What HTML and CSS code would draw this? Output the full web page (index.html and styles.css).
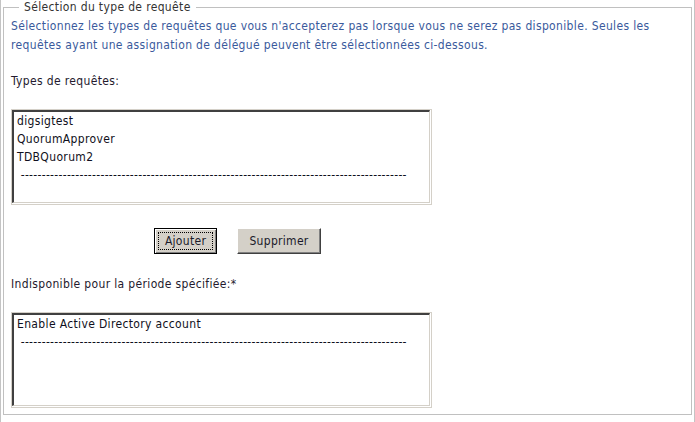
FILE: index.html
```html
<!DOCTYPE html>
<html>
<head>
	<link rel="stylesheet" href="styles.css">
</head>

<body>

	<div class="frame">
		<fieldset class="group">
			<legend>Sélection du type de requête</legend>

			<p class="intro">Sélectionnez les types de requêtes que vous n'accepterez pas lorsque vous ne serez pas disponible. Seules les requêtes ayant une assignation de délégué peuvent être sélectionnées ci-dessous.</p>

			<div class="label">Types de requêtes:</div>
			<div class="listbox">
				<div class="listbox-inner">
					<div class="item">digsigtest</div>
					<div class="item">QuorumApprover</div>
					<div class="item">TDBQuorum2</div>
					<div class="item sep">&nbsp;--------------------------------------------------------------------------------------------</div>
				</div>
			</div>

			<div class="buttons">
				<button class="btn focused"><span>Ajouter</span></button>
				<button class="btn"><span>Supprimer</span></button>
			</div>

			<div class="label label-bottom">Indisponible pour la période spécifiée:*</div>
			<div class="listbox">
				<div class="listbox-inner">
					<div class="item">Enable Active Directory account</div>
					<div class="item sep">&nbsp;--------------------------------------------------------------------------------------------</div>
				</div>
			</div>
		</fieldset>
	</div>

</body>
</html>
```

FILE: styles.css
```css
html, body {
	margin:0;
	padding:0;
	background:white;
}
body {
	font-family:"DejaVu Sans Condensed","DejaVu Sans",sans-serif;
	font-size:12px;
	letter-spacing:0.35px;
	line-height:19px;
	color:#222;
	width:695px;
	height:422px;
	overflow:hidden;
}
.frame {
	border-left:1px solid #c4c4c4;
	border-right:1px solid #c4c4c4;
	height:422px;
	box-sizing:border-box;
	padding:0 2px;
}
.group {
	margin:0;
	border:1px solid #c0c0c0;
	padding:2px 7px 6px 7px;
}
.group legend {
	margin-left:8px;
	padding:0 5px;
	line-height:15px;
	color:#333;
}
.intro {
	margin:0;
	color:#3a5a9c;
	line-height:19px;
}
.label {
	margin-top:17px;
	color:#241a2e;
}
.label-bottom {
	margin-top:21px;
}
.listbox {
	margin-top:18px;
	width:421px;
	height:96px;
	box-sizing:border-box;
	border:1px solid #d4d0c8;
	padding:0 1px 1px 0;
}
.listbox-inner {
	height:100%;
	box-sizing:border-box;
	border-top:2px solid #404040;
	border-left:2px solid #404040;
	border-right:1px solid #d4d0c8;
	border-bottom:1px solid #d4d0c8;
	padding:0 3px;
	overflow:hidden;
}
.item {
	line-height:18px;
	color:#101020;
	white-space:nowrap;
}
.sep {
	letter-spacing:0.3px;
}
.buttons {
	display:flex;
	gap:20px;
	margin-top:23px;
	padding-left:143px;
}
.btn {
	font-family:inherit;
	font-size:12px;
	letter-spacing:0.3px;
	color:#1a1a2a;
	background:#d4d0c8;
	height:26px;
	padding:0;
	border:none;
	border-top:1px solid #ffffff;
	border-left:1px solid #ffffff;
	border-right:1px solid #404040;
	border-bottom:1px solid #404040;
	box-shadow:inset -1px -1px 0 #808080;
	width:84px;
}
.btn.focused {
	width:63px;
	border:1px solid #000;
	box-shadow:inset 1px 1px 0 #fff, inset -1px -1px 0 #808080;
}
.btn.focused span {
	display:block;
	margin:3px;
	border:1px dotted #000;
	line-height:16px;
}
```
